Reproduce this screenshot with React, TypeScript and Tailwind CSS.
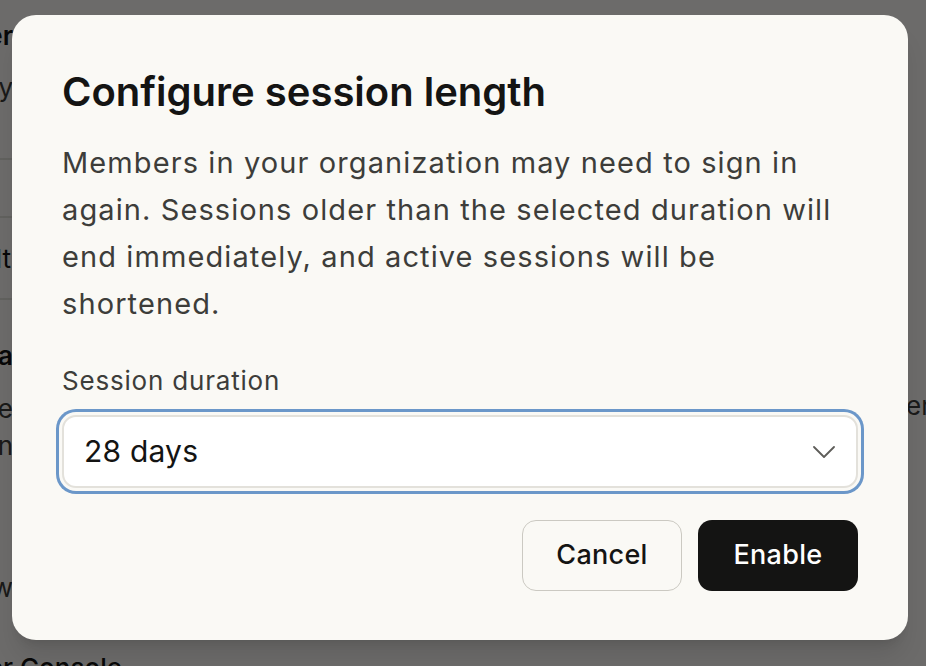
import { useState } from "react";
import type { ReactNode } from "react";

const font = { fontFamily: "Inter, 'Noto Sans', sans-serif" };

interface EdgeRowProps {
  height: string;
  width?: string;
  align?: string;
  className?: string;
  children?: ReactNode;
}

// a row of the settings page behind the dialog; only its right end shows at the left edge
const EdgeRow = ({
  height,
  width = "w-[13px]",
  align = "items-end",
  className = "",
  children,
}: EdgeRowProps) => (
  <div className={`flex shrink-0 ${align} ${height} ${className}`}>
    <div className={`flex justify-end overflow-hidden whitespace-nowrap ${width}`}>{children}</div>
  </div>
);

const BackgroundPage = () => {
  return (
    <div className="flex h-[666px] w-[926px] overflow-hidden bg-[#faf9f5] text-[26px] leading-[39px] text-[#141413]">
      <div className="flex w-[200px] shrink-0 flex-col">
        <EdgeRow height="h-[68px]" className="pb-[13px] font-semibold">
          Member
        </EdgeRow>
        <EdgeRow height="h-[45px]" align="items-start" className="text-[#3d3d3a]">
          Manage policy
        </EdgeRow>
        <div className="h-[47px] w-[13px] shrink-0 border-b-2 border-[#e2e0d9]" />
        <div className="h-[58px] w-[13px] shrink-0 border-b-2 border-[#e2e0d9]" />
        <EdgeRow
          height="h-[82px]"
          width="w-[11px]"
          align="items-center"
          className="w-[13px] border-b-2 border-[#e2e0d9]"
        >
          Default
        </EdgeRow>
        <EdgeRow height="h-[75px]" className="font-semibold">
          Orga
        </EdgeRow>
        <EdgeRow height="h-[52px]" className="leading-[37px] text-[#3d3d3a]">
          Some
        </EdgeRow>
        <EdgeRow height="h-[37px]" className="leading-[37px] text-[#3d3d3a]">
          Sign in
        </EdgeRow>
        <EdgeRow height="h-[143px]" className="text-[#3d3d3a]">
          Allow
        </EdgeRow>
        <EdgeRow height="h-[80px]" width="w-[122px]" className="font-medium">
          Developer Console
        </EdgeRow>
      </div>
      <div className="flex-1" />
      <div className="flex w-[20px] flex-col overflow-hidden text-[#3d3d3a]">
        <div className="h-[386px] shrink-0" />
        <div className="whitespace-nowrap">enabled</div>
      </div>
    </div>
  );
};

export default function App() {
  const [duration] = useState("28 days");

  return (
    <div className="relative h-[666px] w-[926px] overflow-hidden" style={font}>
      <BackgroundPage />
      <div className="absolute inset-0 bg-black/[0.57]">
        <div className="ml-[12px] mt-[15px] flex h-[625px] w-[896px] flex-col rounded-[24px] bg-[#faf9f5] px-[50px] pt-[53px] shadow-xl">
          <h2 className="text-[40px] font-semibold leading-[48px] text-[#141413]">
            Configure session length
          </h2>
          <p className="mt-[23px] text-[29px] leading-[47px] tracking-[1.1px] text-[#3d3d3a]">
            Members in your organization may need to sign in again. Sessions
            older than the selected duration will end immediately, and active
            sessions will be shortened.
          </p>

          <label className="mt-[36px] text-[26px] leading-[36px] tracking-[0.8px] text-[#3d3d3a]">
            Session duration
          </label>
          <div className="mt-[16px] flex h-[73px] shrink-0 items-center justify-between rounded-[14px] border-2 border-[#e3e1db] bg-white pl-[20px] pr-[21px] ring-[3px] ring-[#6b97c9] ring-offset-[3px] ring-offset-[#faf9f5]">
            <span className="text-[30px] tracking-[0.2px] text-[#141413]">{duration}</span>
            <svg width="22" height="12" viewBox="0 0 22 12" fill="none">
              <path
                d="M1 1L11 11L21 1"
                stroke="#5e5d59"
                strokeWidth="1.8"
                strokeLinecap="round"
                strokeLinejoin="round"
              />
            </svg>
          </div>

          <div className="mt-[32px] flex justify-end gap-[16px]">
            <button className="h-[71px] w-[160px] rounded-[14px] border border-[#cbc9c2] bg-[#faf9f5] text-[27px] font-medium tracking-[0.3px] text-[#141413]">
              Cancel
            </button>
            <button className="h-[71px] w-[160px] rounded-[14px] bg-[#141413] text-[27px] font-medium tracking-[0.3px] text-white">
              Enable
            </button>
          </div>
        </div>
      </div>
    </div>
  );
}
